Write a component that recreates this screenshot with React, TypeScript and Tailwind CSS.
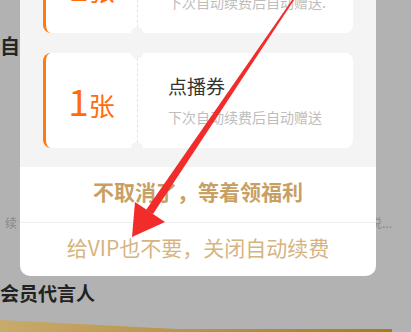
const font = { fontFamily: '"Noto Sans CJK SC", "Noto Sans", sans-serif' };

function Ticket({ amount, unit, title, note }: { amount: string; unit: string; title: string; note: string }) {
    return (
        <div className="relative flex h-[95px] rounded-lg bg-white">
            <div className="flex w-[94px] shrink-0 items-baseline justify-center rounded-l-lg border-l-[3px] border-[#ff7a0f] pt-[29px] text-[#ff6c0a]">
                <span className="text-[37px] leading-none">{amount}</span>
                <span className="text-[26px] leading-none">{unit}</span>
            </div>
            <div className="relative w-0 border-l border-dashed border-[#e2e2e2]">
                <div className="absolute -left-[7px] -top-[6px] h-3 w-3 rounded-full bg-[#f4f4f4]" />
                <div className="absolute -bottom-[6px] -left-[7px] h-3 w-3 rounded-full bg-[#f4f4f4]" />
            </div>
            <div className="flex flex-col pl-[30px] pt-[20px]">
                <span className="text-[19px] leading-[26px] text-[#333]">{title}</span>
                <span className="mt-[9px] text-[14px] leading-[18px] text-[#bdbdbd]">{note}</span>
            </div>
        </div>
    );
}

export default function App() {
    return (
        <div className="relative h-[332px] w-[411px] overflow-hidden bg-[#b2b2b2]" style={font}>
            {/* dimmed page behind */}
            <div className="absolute left-0 top-[31px] text-[20px] font-bold text-[#262626]">自动续费</div>
            <div className="absolute left-[5px] top-[214px] text-[12px] text-[#8a8a8a]">续</div>
            <div className="absolute left-[370px] top-[214px] text-[12px] text-[#8a8a8a]">说...</div>
            <div className="absolute left-0 top-[279px] text-[19px] font-bold text-[#222]">会员代言人</div>
            <div className="absolute left-0 top-[320px] h-[20px] w-[392px] rounded-tr-lg bg-gradient-to-r from-[#c8aa6a] to-[#a47c1a] [clip-path:polygon(0_0,45%_45%,100%_45%,100%_100%,0_100%)]" />

            {/* modal */}
            <div className="absolute left-[20px] top-[-80px] w-[356px] overflow-hidden rounded-b-[10px] bg-white">
                <div className="flex flex-col gap-5 bg-[#f4f4f4] px-[23px] pb-[19px] pt-[18px]">
                    <Ticket amount="1" unit="张" title="点播券" note="下次自动续费后自动赠送." />
                    <Ticket amount="1" unit="张" title="点播券" note="下次自动续费后自动赠送" />
                </div>
                <div className="flex h-[56px] items-center justify-center border-b border-[#f0f0f0] pb-[5px] text-[21px] font-bold text-[#c9a064]">
                    不取消了，等着领福利
                </div>
                <div className="flex h-[53px] items-center justify-center pb-[4px] text-[21px] text-[#d6b481]">
                    给VIP也不要，关闭自动续费
                </div>
            </div>

            {/* red arrow */}
            <svg className="pointer-events-none absolute left-0 top-0" width="411" height="332" viewBox="0 0 411 332">
                <polygon points="292,0 294,0 153,214 146,210" fill="#f22b2b" />
                <polygon points="132,237 135,202 165,222" fill="#f22b2b" />
            </svg>
        </div>
    );
}
